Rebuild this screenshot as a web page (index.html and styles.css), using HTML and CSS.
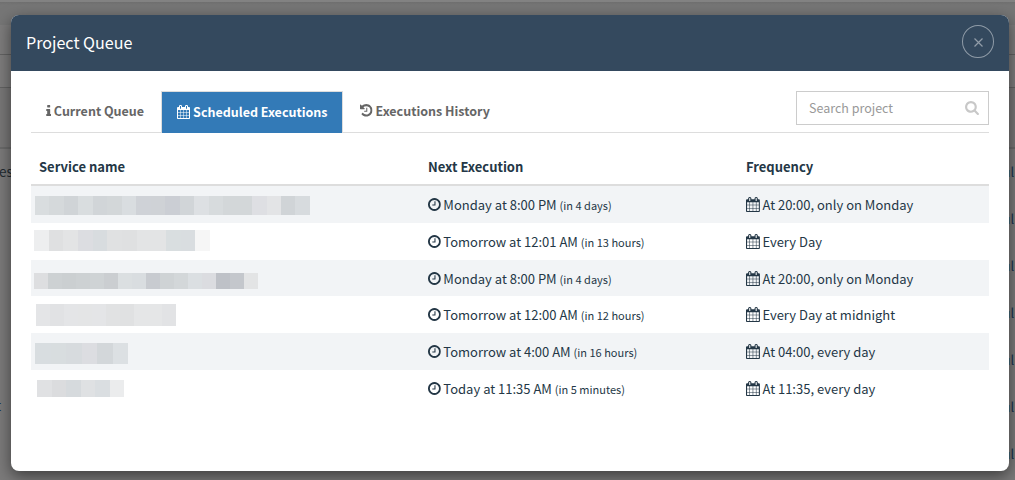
FILE: index.html
```html
<!DOCTYPE html>
<html lang="en">
<head>
<meta charset="utf-8">
<title>Project Queue</title>
<link rel="stylesheet" href="styles.css">
</head>
<body>
<svg class="sprite" aria-hidden="true">
<symbol id="clock" viewBox="0 0 1536 1792"><path d="M896 544v448q0 14-9 23t-23 9h-320q-14 0-23-9t-9-23v-64q0-14 9-23t23-9h224v-352q0-14 9-23t23-9h64q14 0 23 9t9 23zm416 352q0-148-73-273t-198-198-273-73-273 73-198 198-73 273 73 273 198 198 273 73 273-73 198-198 73-273zm224 0q0 209-103 385.5t-279.5 279.5-385.5 103-385.5-103-279.5-279.5-103-385.5 103-385.5 279.5-279.5 385.5-103 385.5 103 279.5 279.5 103 385.5z"/></symbol>
<symbol id="calendar" viewBox="0 0 1664 1792"><path d="M128 1664h288v-288h-288v288zm352 0h320v-288h-320v288zm-352-352h288v-320h-288v320zm352 0h320v-320h-320v320zm-352-384h288v-288h-288v288zm736 736h320v-288h-320v288zm-384-736h320v-288h-320v288zm768 736h288v-288h-288v288zm-384-352h320v-320h-320v320zm-352-864v-288q0-13-9.500-22.500t-22.500-9.500h-64q-13 0-22.500 9.500t-9.500 22.500v288q0 13 9.500 22.500t22.500 9.500h64q13 0 22.500-9.500t9.500-22.500zm736 864h288v-320h-288v320zm-384-384h320v-288h-320v288zm384 0h288v-288h-288v288zm32-480v-288q0-13-9.500-22.500t-22.500-9.500h-64q-13 0-22.500 9.500t-9.500 22.500v288q0 13 9.500 22.500t22.500 9.500h64q13 0 22.500-9.500t9.500-22.500zm384-64v1280q0 52-38 90t-90 38h-1408q-52 0-90-38t-38-90v-1280q0-52 38-90t90-38h128v-96q0-66 47-113t113-47h64q66 0 113 47t47 113v96h384v-96q0-66 47-113t113-47h64q66 0 113 47t47 113v96h128q52 0 90 38t38 90z"/></symbol>
<symbol id="history" viewBox="0 0 1536 1792"><path d="M1536 896q0 156-61 298t-164 245-245 164-298 61q-172 0-327-72.500t-264-204.500q-7-10-6.500-22.500t8.500-20.500l137-138q10-9 25-9 16 2 23 12 73 95 179 147t225 52q104 0 198.500-40.500t163.500-109.500 109.500-163.500 40.500-198.500-40.500-198.500-109.500-163.500-163.500-109.500-198.500-40.500q-98 0-188 35.500t-160 101.500l137 138q31 30 14 69-17 40-59 40h-448q-26 0-45-19t-19-45v-448q0-42 40-59 39-17 69 14l130 129q107-101 244.500-156.500t284.500-55.500q156 0 298 61t245 164 164 245 61 298zm-640-288v448q0 14-9 23t-23 9h-320q-14 0-23-9t-9-23v-64q0-14 9-23t23-9h224v-352q0-14 9-23t23-9h64q14 0 23 9t9 23z"/></symbol>
<symbol id="info" viewBox="0 0 640 1792"><path d="M640 1344v128q0 26-19 45t-45 19h-512q-26 0-45-19t-19-45v-128q0-26 19-45t45-19h64v-384h-64q-26 0-45-19t-19-45v-128q0-26 19-45t45-19h384q26 0 45 19t19 45v576h64q26 0 45 19t19 45zm-128-1152v192q0 26-19 45t-45 19h-256q-26 0-45-19t-19-45v-192q0-26 19-45t45-19h256q26 0 45 19t19 45z"/></symbol>
<symbol id="search" viewBox="0 0 1664 1792"><path d="M1152 832q0-185-131.500-316.500t-316.500-131.500-316.500 131.500-131.500 316.500 131.500 316.500 316.500 131.500 316.500-131.500 131.500-316.500zm512 832q0 52-38 90t-90 38q-54 0-90-38l-343-342q-179 124-399 124-143 0-273.500-55.500t-225-150-150-225-55.500-273.500 55.500-273.500 150-225 225-150 273.500-55.500 273.500 55.500 225 150 150 225 55.500 273.500q0 220-124 399l343 343q37 37 37 90z"/></symbol>
</svg>
<div class="backdrop" aria-hidden="true">
  <div class="bd-top"></div>
  <div class="bd-band"></div>
  <div class="bd-line"></div>
  <div class="bd-line second"></div>
  <div class="bd-head"></div>
  <div class="bd-body">
    <div class="bd-left"><span>es</span><span class="bd-link">t</span></div>
    <div class="bd-right"><span>ul</span><span>ul</span><span>ul</span><span>ul</span><span>ul</span><span>ul</span><span>ul</span></div>
  </div>
</div>
<main class="modal">
  <header class="modal-header">
    <h1 class="title">Project Queue</h1>
    <button class="close" aria-label="Close"><svg viewBox="0 0 9 9"><path d="M.5.5l8 8M8.500.5l-8 8"/></svg></button>
  </header>
  <section class="modal-body">
    <nav class="tabs">
      <a class="tab"><svg class="icon info"><use href="#info"/></svg><span>Current Queue</span></a>
      <a class="tab active"><svg class="icon cal"><use href="#calendar"/></svg><span>Scheduled Executions</span></a>
      <a class="tab"><svg class="icon hist"><use href="#history"/></svg><span>Executions History</span></a>
      <div class="search"><span>Search project</span><svg class="icon mag"><use href="#search"/></svg></div>
    </nav>
    <div class="table">
      <div class="row head"><div>Service name</div><div>Next Execution</div><div>Frequency</div></div>
      <div class="row"><div class="mask m1"></div><div><svg class="icon clk"><use href="#clock"/></svg>Monday at 8:00 PM <small>(in 4 days)</small></div><div><svg class="icon cal"><use href="#calendar"/></svg>At 20:00, only on Monday</div></div>
      <div class="row"><div class="mask m2"></div><div><svg class="icon clk"><use href="#clock"/></svg>Tomorrow at 12:01 AM <small>(in 13 hours)</small></div><div><svg class="icon cal"><use href="#calendar"/></svg>Every Day</div></div>
      <div class="row"><div class="mask m3"></div><div><svg class="icon clk"><use href="#clock"/></svg>Monday at 8:00 PM <small>(in 4 days)</small></div><div><svg class="icon cal"><use href="#calendar"/></svg>At 20:00, only on Monday</div></div>
      <div class="row"><div class="mask m4"></div><div><svg class="icon clk"><use href="#clock"/></svg>Tomorrow at 12:00 AM <small>(in 12 hours)</small></div><div><svg class="icon cal"><use href="#calendar"/></svg>Every Day at midnight</div></div>
      <div class="row"><div class="mask m5"></div><div><svg class="icon clk"><use href="#clock"/></svg>Tomorrow at 4:00 AM <small>(in 16 hours)</small></div><div><svg class="icon cal"><use href="#calendar"/></svg>At 04:00, every day</div></div>
      <div class="row"><div class="mask m6"></div><div><svg class="icon clk"><use href="#clock"/></svg>Today at 11:35 AM <small>(in 5 minutes)</small></div><div><svg class="icon cal"><use href="#calendar"/></svg>At 11:35, every day</div></div>
    </div>
  </section>
</main>
<script src="mask.js"></script>
</body>
</html>
```
FILE: mask.js
```js
// Redacted service names: each block is a strip of equal-width tinted cells.
const masks = {
  m1: ['d9dddf','d5d9db','d0d4d7','d9dddf','d1d5d8','d3d7d9','d9dde0','cfd2d7','cfd2d6','cbced4','d1d5d8','dde0e3','d7dbdd','d3d7d9','d3d7d9','dedfe3','e3e4e6','d0d4d7','d7dbde'],
  m2: ['edeeef','dfe0e1','e3e4e5','dcdde1','d8dcdf','e0e1e2','dfe0e1','e3e4e5','e3e4e5','d9dee0','d9dde0','f6f6f6'],
  m3: ['dddee0','cdd1d3','cbcfd1','cdd1d3','cfd3d5','cbced1','dbdfe1','d9dde0','c8cbd0','cfd3d5','d3d7d9','dbdfe2','dbdce0','bec1c7','c4c7cc','e3e4e5'],
  m4: ['e4e5e7','e1e2e4','e4e5e7','e4e5e6','e4e5e7','e1e2e3','e0e1e2','e5e6e7','e5e6e7','e2e3e5'],
  m5: ['d8dde0','d8dddf','d7dbde','dcdde1','d3d7da','dce0e3'],
  m6: ['e0e1e3','dbdcde','d6dadd','dfe1e3','dadee1','ebeced']
};
for (const [name, colors] of Object.entries(masks)) {
  const box = document.querySelector('.' + name);
  for (const c of colors) {
    const cell = document.createElement('i');
    cell.style.background = '#' + c;
    box.append(cell);
  }
}
```
FILE: styles.css
```css
* { box-sizing: border-box; }
body {
  margin: 0;
  height: 480px;
  overflow: hidden;
  font-family: "Noto Sans CJK SC", "Noto Sans", sans-serif;
  font-size: 13px;
  line-height: 20px;
  color: #243746;
  background: #777;
}
.sprite { position: absolute; width: 0; height: 0; }
.icon { fill: currentColor; height: 15px; flex: none; vertical-align: -2px; }
.icon.clk { width: 12.860px; margin-right: 2.500px; }
.icon.cal { width: 13.930px; margin-right: 2.500px; }
.icon.hist { width: 12.860px; margin-right: 2.500px; }
.icon.info { width: 5.360px; margin-right: 2.500px; }
.icon.mag { width: 14px; height: 15px; color: #c8c8c8; }

.backdrop { height: 480px; background: #7d7c7c; display: flex; flex-direction: column; }
.bd-top { height: 2px; background: #828282; }
.bd-band { height: 23px; background: linear-gradient(#6f6f6f, #767676 3px); }
.bd-line { height: 30px; border-bottom: 1px solid #626262; }
.bd-line.second { height: 33px; }
.bd-head { height: 61px; border-bottom: 2px solid #6a6a6a; background: #787777; }
.bd-body { flex: 1; display: flex; justify-content: space-between; overflow: hidden; color: #222a30; background: #7b7a7a; }
.bd-left { display: flex; flex-direction: column; gap: 214px; padding-top: 12px; margin-left: -1px; font-size: 13.500px; }
.bd-link { margin-left: -3px; color: #18334f; }
.bd-right { display: flex; flex-direction: column; gap: 27px; padding-top: 13px; width: 12.500px; color: #18334f; }

.modal {
  position: absolute;
  left: 11px; top: 15px;
  width: 998px; height: 456px;
  border-radius: 8px;
  background: #fff;
  overflow: hidden;
  box-shadow: 0 5px 15px rgba(0,0,0,.5);
}
.modal-header {
  height: 56px;
  display: flex;
  align-items: center;
  justify-content: space-between;
  padding: 0 15px;
  background: #34495e;
  color: #fff;
}
.title { margin: 0 0 2px; font-size: 16.100px; font-weight: 400; }
.close {
  width: 32px; height: 33px;
  margin: 0 0 3px;
  padding: 2px 0 0;
  display: grid;
  place-items: center;
  border: 1px solid #8f9ba7;
  border-radius: 50%;
  background: none;
}
.close svg { width: 9px; height: 9px; stroke: #919ca8; stroke-width: 1.200; }
.modal-body { padding: 20px; }
.tabs {
  height: 42px;
  display: flex;
  align-items: flex-start;
  border-bottom: 1px solid #ddd;
  font-size: 12.500px;
  font-weight: 700;
  color: #666;
}
.tab { height: 39px; display: flex; align-items: center; padding: 0 15px; white-space: nowrap; }
.tab .icon { height: 14px; }
.tab .icon.cal { width: 13px; margin-right: 3px; }
.tab .icon.hist { width: 12.500px; height: 14.600px; margin-right: 3px; }
.tab.active { height: 42px; padding: 0 14.500px 1px 15px; color: #fff; background: #337ab7; border: 1px solid #ddd; border-bottom: 0; margin: 0 2px; }
.search {
  width: 193px; height: 34px;
  margin-left: auto;
  padding: 0 9px 1px 12px;
  display: flex;
  align-items: center;
  justify-content: space-between;
  border: 1px solid #ccc;
  font-weight: 400;
  color: #999;
}
.table { padding-top: 15px; }
.row {
  height: 36.800px;
  display: grid;
  grid-template-columns: 389px 318px 1fr;
  align-items: center;
  padding: 1.400px 0 0 8px;
  white-space: nowrap;
}
.row.head { height: 38px; font-weight: 700; border-bottom: 2px solid #ddd; }
.row:nth-child(even) { background: #f2f4f6; }
small { font-size: 11px; }
.mask { display: flex; }
.mask i { flex: 1; }
.m1 { width: 275px; height: 19px; margin: 0 0 0 -4px; }
.m2 { width: 176px; height: 21px; margin: -3px 0 0 -5px; }
.m3 { width: 224px; height: 16px; margin: 4.600px 0 0 -5px; }
.m4 { width: 140px; height: 22px; margin: -1.400px 0 0 -3px; }
.m5 { width: 93px; height: 21px; margin: 1.600px 0 0 -4px; }
.m6 { width: 87px; height: 17px; margin: -1.400px 0 0 -2px; }
```
